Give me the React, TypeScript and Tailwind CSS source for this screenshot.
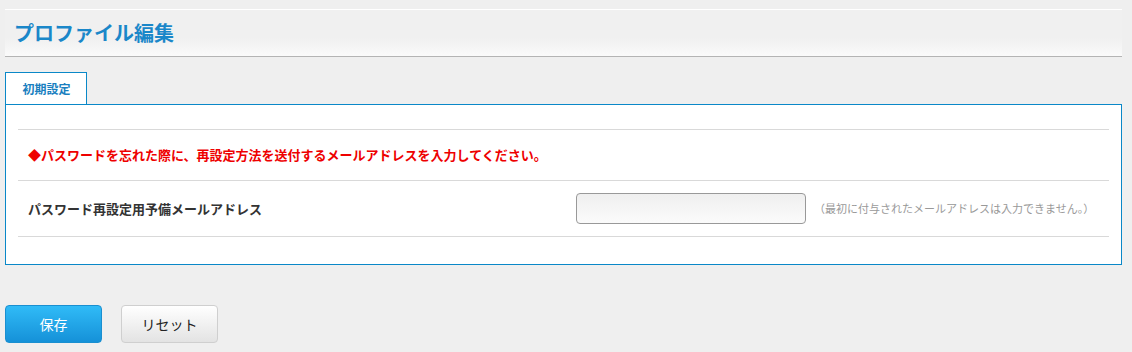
const font = 'font-["Noto_Sans_CJK_JP","Noto_Sans",sans-serif]';

const App = () => {
  return (
    <div className={`min-h-[352px] bg-[#efefef] pl-[5px] pr-[10px] pt-[9px] ${font}`}>
      {/* page heading */}
      <div className="flex h-[48px] items-center border-t border-b border-t-white border-b-[#b4b4b4] bg-gradient-to-b from-[#f0f0f0] from-60% to-[#fafafa] pl-[9px]">
        <h1 className="text-[20px] font-bold leading-none text-[#1a87c9]">プロファイル編集</h1>
      </div>

      {/* tab */}
      <div className="mt-[15px] flex">
        <div className="flex h-[32px] w-[82px] items-center justify-center border-x border-t border-[#0a88c8] bg-white pl-[1px] text-[12px] font-bold text-[#1a7fbf]">
          初期設定
        </div>
      </div>

      {/* panel */}
      <div className="border border-[#0a88c8] bg-white px-[12px] pt-[24px] pb-[27px]">
        <div className="border-t border-[#d9d9d9]">
          <div className="flex h-[51px] items-center border-b border-[#d9d9d9] pl-[10px] text-[13px] font-bold text-[#ee0000]">
            ◆パスワードを忘れた際に、再設定方法を送付するメールアドレスを入力してください。
          </div>
          <div className="flex h-[56px] items-center border-b border-[#d9d9d9] pl-[10px]">
            <div className="w-[548px] text-[13px] font-bold text-[#333]">パスワード再設定用予備メールアドレス</div>
            <input
              type="text"
              className="h-[31px] w-[230px] rounded-[4px] border border-[#999] bg-gradient-to-b from-[#efefef] to-[#fbfbfb] px-2 text-[13px] outline-none"
            />
            <span className="ml-[8px] text-[11px] text-[#999]">（最初に付与されたメールアドレスは入力できません。）</span>
          </div>
        </div>
      </div>

      {/* actions */}
      <div className="mt-[40px] flex gap-[19px]">
        <button className="h-[38px] w-[97px] rounded-[4px] border border-[#1a8fd0] bg-gradient-to-b from-[#30bbf7] to-[#1591d8] text-[14px] text-white">
          保存
        </button>
        <button className="h-[38px] w-[97px] rounded-[4px] border border-[#cfcfcf] bg-gradient-to-b from-white to-[#e3e3e3] text-[14px] text-[#222]">
          リセット
        </button>
      </div>
    </div>
  );
};

export default App;
